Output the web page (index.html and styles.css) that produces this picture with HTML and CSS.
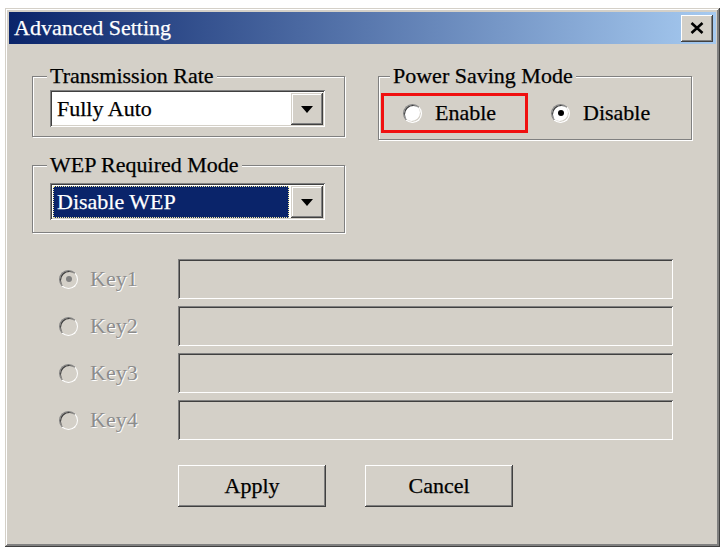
FILE: index.html
```html
<!DOCTYPE html>
<html>
<head>
<meta charset="utf-8">
<link rel="stylesheet" href="styles.css">
</head>
<body>
<div class="window">
  <div class="titlebar">
    <span class="title">Advanced Setting</span>
    <span class="close"><svg width="14" height="12" viewBox="0 0 14 12"><path d="M1.5 1 L12.5 11 M12.5 1 L1.5 11" stroke="#000" stroke-width="2.6" fill="none"/></svg></span>
  </div>
  <div class="content">
    <div class="top">
      <div class="col-left">
        <div class="group g-rate">
          <span class="legend">Transmission Rate</span>
          <div class="combo c-rate">
            <span class="combo-text">Fully Auto</span>
            <span class="drop"><span class="tri"></span></span>
          </div>
        </div>
        <div class="group g-wep">
          <span class="legend">WEP Required Mode</span>
          <div class="combo c-wep">
            <span class="combo-text selected">Disable WEP</span>
            <span class="drop"><span class="tri"></span></span>
          </div>
        </div>
      </div>
      <div class="group g-power">
        <span class="legend lg-power">Power Saving Mode</span>
        <div class="power-row">
          <div class="highlight">
            <span class="radio"></span><span class="rlabel">Enable</span>
          </div>
          <span class="radio checked r-disable"></span><span class="rlabel">Disable</span>
        </div>
      </div>
    </div>
    <div class="keys">
      <div class="key-row">
        <span class="keysel"><span class="radio disabled checked"></span><span class="klabel">Key1</span></span>
        <span class="field"></span>
      </div>
      <div class="key-row">
        <span class="keysel"><span class="radio disabled"></span><span class="klabel">Key2</span></span>
        <span class="field"></span>
      </div>
      <div class="key-row">
        <span class="keysel"><span class="radio disabled"></span><span class="klabel">Key3</span></span>
        <span class="field"></span>
      </div>
      <div class="key-row">
        <span class="keysel"><span class="radio disabled"></span><span class="klabel">Key4</span></span>
        <span class="field"></span>
      </div>
    </div>
    <div class="buttons">
      <span class="btn">Apply</span>
      <span class="btn">Cancel</span>
    </div>
  </div>
</div>
</body>
</html>
```

FILE: styles.css
```css
html, body {
  margin: 0;
  background: #ffffff;
}
body {
  font-family: "Liberation Serif", "Times New Roman", serif;
  font-size: 22px;
  color: #000;
  -webkit-text-stroke: 0.25px currentColor;
}
.window {
  margin: 8px 0 0 5px;
  width: 715px;
  height: 539px;
  box-sizing: border-box;
  padding: 4px;
  background: #d4d0c8;
  box-shadow: inset -1px -1px 0 #404040, inset 1px 1px 0 #d4d0c8, inset -2px -2px 0 #808080, inset 2px 2px 0 #ffffff, inset -3px -3px 0 #808080;
}
.titlebar {
  height: 32px;
  display: flex;
  align-items: center;
  background: linear-gradient(to right, #0a246a, #a6caf0);
  color: #fff;
  padding-left: 5px;
}
.title {
  line-height: 32px;
}
.close {
  margin-left: auto;
  margin-right: 3px;
  width: 32px;
  height: 27px;
  background: #d4d0c8;
  display: flex;
  align-items: center;
  justify-content: center;
  box-shadow: inset -1px -1px 0 #404040, inset 1px 1px 0 #ffffff, inset -2px -2px 0 #808080;
}
.content {
  padding: 32px 0 0 23px;
}
.top {
  display: flex;
  gap: 33px;
}
.col-left {
  width: 313px;
  display: flex;
  flex-direction: column;
  gap: 28px;
}
.group {
  box-sizing: border-box;
  border: 1px solid #808080;
  box-shadow: 1px 1px 0 #ffffff, inset 1px 1px 0 #ffffff;
}
.g-rate { height: 61px; }
.g-wep { height: 68px; }
.g-power { width: 314px; height: 64px; }
.legend {
  display: block;
  width: fit-content;
  margin: -12px 0 0 14px;
  padding: 0 3px;
  height: 22px;
  line-height: 22px;
  background: #d4d0c8;
}
.lg-power { margin-left: 11px; }
.combo {
  box-sizing: border-box;
  width: 275px;
  height: 37px;
  margin-left: 17px;
  padding: 3px 2px 2px 3px;
  display: flex;
  background: #fff;
  box-shadow: inset 1px 1px 0 #808080, inset -1px -1px 0 #ffffff, inset 2px 2px 0 #404040, inset -2px -2px 0 #d4d0c8;
}
.c-rate { margin-top: 3px; }
.c-wep { margin-top: 7px; }
.combo-text {
  flex: 1;
  display: flex;
  align-items: center;
  padding-left: 4px;
  margin-right: 2px;
}
.selected {
  background: #0a246a;
  color: #fff;
  outline: 1px dotted #f0e8a0;
  outline-offset: -1px;
}
.drop {
  width: 32px;
  height: 32px;
  background: #d4d0c8;
  display: flex;
  align-items: center;
  justify-content: center;
  box-shadow: inset -1px -1px 0 #404040, inset 1px 1px 0 #d4d0c8, inset -2px -2px 0 #808080, inset 2px 2px 0 #ffffff;
}
.tri {
  width: 0;
  height: 0;
  border-left: 6px solid transparent;
  border-right: 6px solid transparent;
  border-top: 7px solid #000;
}
.power-row {
  display: flex;
  align-items: center;
  margin: 6px 0 0 2px;
}
.highlight {
  box-sizing: border-box;
  width: 147px;
  height: 40px;
  border: 3px solid #f01010;
  display: flex;
  align-items: center;
  padding-left: 19px;
}
.radio {
  position: relative;
  flex: none;
  box-sizing: border-box;
  width: 19px;
  height: 19px;
  border-radius: 50%;
  border: 1px solid;
  border-color: #808080 #ffffff #ffffff #808080;
  background: #ffffff;
  box-shadow: inset 1px 1px 0 #404040, inset -1px -1px 0 #d4d0c8;
}
.radio.checked::after {
  content: "";
  position: absolute;
  left: 5.5px;
  top: 5.5px;
  width: 6px;
  height: 6px;
  border-radius: 50%;
  background: #000;
}
.radio.disabled {
  background: #d4d0c8;
}
.radio.disabled.checked::after {
  background: #808080;
}
.rlabel {
  margin-left: 13px;
}
.r-disable {
  margin-left: 23px;
}
.keys {
  margin: 26px 0 0 27px;
  display: flex;
  flex-direction: column;
  gap: 7px;
}
.key-row {
  display: flex;
  align-items: center;
  height: 40px;
}
.keysel {
  width: 119px;
  display: flex;
  align-items: center;
}
.klabel {
  margin-left: 12px;
  color: #8c8c8c;
  text-shadow: 1px 1px 0 #ffffff;
  -webkit-text-stroke: 0;
}
.field {
  box-sizing: border-box;
  width: 495px;
  height: 40px;
  background: #d4d0c8;
  box-shadow: inset 1px 1px 0 #808080, inset -1px -1px 0 #ffffff, inset 2px 2px 0 #404040, inset -2px -2px 0 #d4d0c8;
}
.buttons {
  margin: 25px 0 0 146px;
  display: flex;
  gap: 39px;
}
.btn {
  box-sizing: border-box;
  width: 148px;
  height: 42px;
  display: flex;
  align-items: center;
  justify-content: center;
  background: #d4d0c8;
  box-shadow: inset -1px -1px 0 #404040, inset 1px 1px 0 #ffffff, inset -2px -2px 0 #808080, inset 2px 2px 0 #d4d0c8;
}
```
